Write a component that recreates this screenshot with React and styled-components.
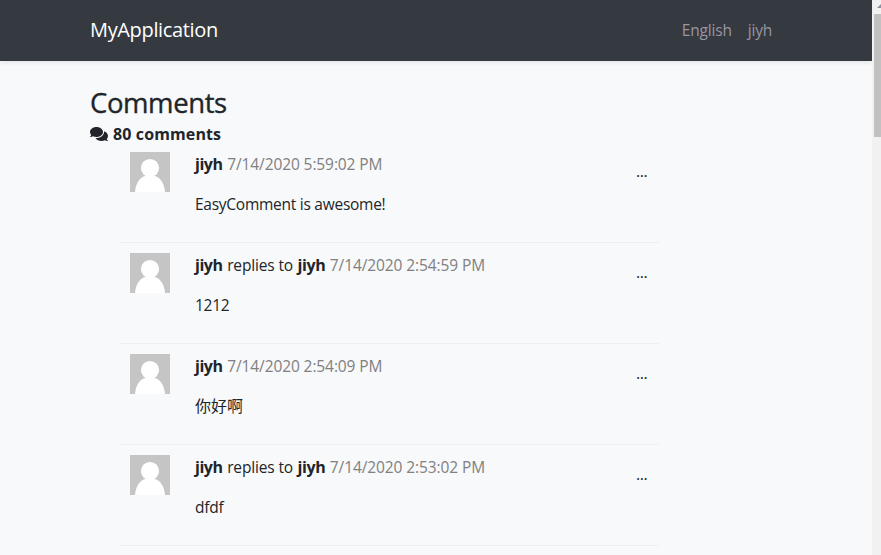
import React from "react";
import styled, { createGlobalStyle } from "styled-components";
import { FaComments } from "react-icons/fa";

const GlobalStyle = createGlobalStyle`
  * { box-sizing: border-box; }
  body {
    margin: 0;
    background: #f8f9fb;
    color: #212529;
    font: 400 16px/24px "Segoe UI", "Open Sans", "Noto Sans CJK SC", sans-serif;
    overflow: hidden;
  }
`;

const Page = styled.div`
  display: flex;
  height: 555px;
  overflow: hidden;
`;

const Main = styled.div`
  width: 872px;
  flex: none;
`;

const Navbar = styled.header`
  height: 61px;
  padding: 0 100px 2px 90px;
  display: flex;
  align-items: center;
  justify-content: space-between;
  background: #343a40;
  box-shadow: 0 2px 4px rgba(0, 0, 0, 0.075);
`;

const Brand = styled.span`
  color: #fff;
  font-size: 20px;
  line-height: 30px;
  letter-spacing: -0.35px;
`;

const NavLinks = styled.nav`
  display: flex;
  gap: 16px;
`;

const NavLink = styled.span`
  color: #9a95a3;
  font-size: 15.5px;
  letter-spacing: -0.2px;
`;

const Content = styled.main`
  padding: 25px 0 0 90px;
`;

const Title = styled.h1`
  margin: 0;
  font-size: 27.5px;
  font-weight: 500;
  line-height: 34px;
  letter-spacing: -0.4px;
  -webkit-text-stroke: 0.35px currentColor;
`;

const Count = styled.div`
  margin-top: 6px;
  display: flex;
  align-items: center;
  gap: 5px;
  height: 16px;
  font-size: 16px;
  font-weight: 700;
  line-height: 16px;
  letter-spacing: 0.12px;

  svg { width: 18px; height: 16px; flex: none; }
`;

const List = styled.div`
  width: 539px;
  margin-left: 30px;
`;

const Row = styled.article`
  height: 101px;
  padding: 10px;
  display: flex;
  border-bottom: 1px solid #eeeff1;
`;

const Avatar = styled.svg`
  width: 40px;
  height: 40px;
  flex: none;
  display: block;
`;

const Body = styled.div`
  flex: 1;
  margin-left: 25px;
  white-space: nowrap;
`;

const Meta = styled.div`
  display: flex;
  gap: 4.6px;
  height: 24px;
  margin-bottom: 16px;
`;

const Name = styled.strong`
  font-weight: 700;
  letter-spacing: -0.45px;
`;

const Action = styled.span`
  font-size: 15.5px;
  letter-spacing: -0.15px;
`;

const Time = styled.time`
  color: #808080;
  font-size: 15.5px;
  letter-spacing: -0.1px;
`;

const Message = styled.p`
  margin: 0;
  font-size: ${(p) => (p.$cjk ? "16px" : "15.5px")};
  letter-spacing: ${(p) => (p.$cjk ? "0" : "-0.26px")};
`;

const More = styled.span`
  width: 13px;
  height: 24px;
  margin-top: 7px;
  letter-spacing: -0.4px;
`;

const Scrollbar = styled.aside`
  width: 9px;
  flex: none;
  padding: 3px 0 0 2px;
  overflow: hidden;
  background: #f1f1f1;
`;

const ScrollArrow = styled.svg`
  display: block;
  width: 10px;
  height: 5px;
  margin: 0 0 6px 3px;
`;

const Thumb = styled.div`
  width: 13px;
  height: 123px;
  background: #c1c1c1;
`;

const comments = [
  { time: "7/14/2020 5:59:02 PM", text: "EasyComment is awesome!" },
  { reply: true, time: "7/14/2020 2:54:59 PM", text: "1212" },
  { time: "7/14/2020 2:54:09 PM", text: "你好啊", cjk: true },
  { reply: true, time: "7/14/2020 2:53:02 PM", text: "dfdf" },
];

function Comment({ item }) {
  return (
    <Row>
      <Avatar viewBox="0 0 40 40">
        <rect width="40" height="40" fill="#c5c5c5" />
        <circle cx="20" cy="16" r="9.1" fill="#fff" />
        <path d="M5 40C5.4 31.5 10.5 24.5 15.5 24H24.5C29.5 24.5 34.6 31.5 35 40Z" fill="#fff" />
      </Avatar>
      <Body>
        <Meta>
          <Name>jiyh</Name>
          {item.reply && <Action>replies to</Action>}
          {item.reply && <Name>jiyh</Name>}
          <Time>{item.time}</Time>
        </Meta>
        <Message $cjk={item.cjk}>{item.text}</Message>
      </Body>
      <More>...</More>
    </Row>
  );
}

export default function App() {
  return (
    <>
      <GlobalStyle />
      <Page>
        <Main>
          <Navbar>
            <Brand>MyApplication</Brand>
            <NavLinks>
              <NavLink>English</NavLink>
              <NavLink>jiyh</NavLink>
            </NavLinks>
          </Navbar>
          <Content>
            <Title>Comments</Title>
            <Count>
              <FaComments />
              <span>80 comments</span>
            </Count>
            <List>
              {comments.map((item) => (
                <Comment key={item.time} item={item} />
              ))}
            </List>
          </Content>
        </Main>
        <Scrollbar>
          <ScrollArrow viewBox="0 0 10 5">
            <path d="M0 5L5 0L10 5Z" fill="#8a8fa3" />
          </ScrollArrow>
          <Thumb />
        </Scrollbar>
      </Page>
    </>
  );
}
